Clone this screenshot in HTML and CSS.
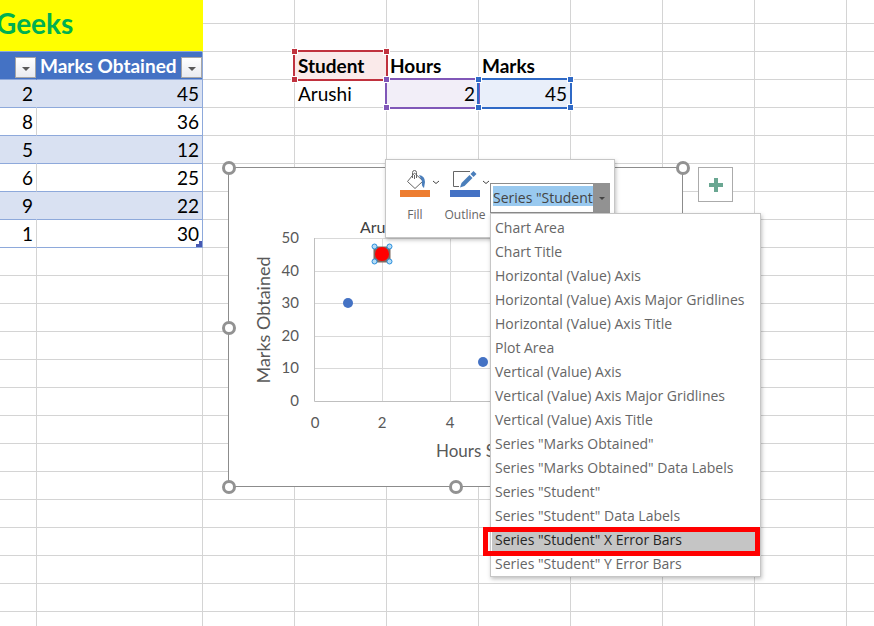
FILE: index.html
```
<!DOCTYPE html>
<html lang="en">
<head>
    <meta charset="UTF-8">
    <meta name="viewport" content="width=device-width, initial-scale=1.0">
    <title>Marks Obtained</title>
    <link rel="stylesheet" href="styles.css">
</head>
<body>
    <div class="sheet">
        <table class="grid">
            <colgroup>
                <col class="col-hours">
                <col class="col-marks">
                <col class="col" span="7">
                <col>
            </colgroup>
            <tbody id="rows">
                <tr class="first">
                    <td class="title" colspan="2" rowspan="2">Geeks</td>
                    <td></td><td></td><td></td><td></td><td></td><td></td><td></td><td></td>
                </tr>
                <tr>
                    <td></td><td></td><td></td><td></td><td></td><td></td><td></td><td></td>
                </tr>
                <tr>
                    <th class="head"><button class="filter" aria-label="Filter hours"></button></th>
                    <th class="head last">Marks Obtained<button class="filter" aria-label="Filter marks"></button></th>
                    <td></td>
                    <th class="range red">Student<i></i></th>
                    <th>Hours</th>
                    <th>Marks</th>
                    <td></td><td></td><td></td><td></td>
                </tr>
                <tr>
                    <td class="data band">2</td><td class="data band last">45</td>
                    <td></td>
                    <td>Arushi</td>
                    <td class="range purple num">2<i></i></td>
                    <td class="range blue num">45<i></i></td>
                    <td></td><td></td><td></td><td></td>
                </tr>
                <tr>
                    <td class="data">8</td><td class="data last">36</td>
                    <td></td><td></td><td></td><td></td><td></td><td></td><td></td><td></td>
                </tr>
                <tr>
                    <td class="data band">5</td><td class="data band last">12</td>
                    <td></td><td></td><td></td><td></td><td></td><td></td><td></td><td></td>
                </tr>
                <tr>
                    <td class="data">6</td><td class="data last">25</td>
                    <td></td><td></td><td></td><td></td><td></td><td></td><td></td><td></td>
                </tr>
                <tr>
                    <td class="data band">9</td><td class="data band last">22</td>
                    <td></td><td></td><td></td><td></td><td></td><td></td><td></td><td></td>
                </tr>
                <tr>
                    <td class="data">1</td><td class="data last corner">30</td>
                    <td></td><td></td><td></td><td></td><td></td><td></td><td></td><td></td>
                </tr>
            </tbody>
        </table>

        <div class="chart">
            <svg width="455" height="320" viewBox="0 0 455 320">
                <rect class="frame" x="0.5" y="0.5" width="454" height="319"/>
                <g class="lines">
                    <path d="M86 71.5H426M86 104.5H426M86 136.5H426M86 169.5H426M86 201.5H426"/>
                    <path d="M154.5 71V234M222.5 71V234M290.5 71V234M358.5 71V234M426.5 71V234"/>
                </g>
                <path class="axis" d="M86.5 71V234.5H426"/>
                <g class="label end">
                    <text x="71" y="76">50</text>
                    <text x="71" y="109">40</text>
                    <text x="71" y="141">30</text>
                    <text x="71" y="174">20</text>
                    <text x="71" y="206">10</text>
                    <text x="71" y="239">0</text>
                </g>
                <g class="label mid">
                    <text x="87" y="261">0</text>
                    <text x="154" y="261">2</text>
                    <text x="222" y="261">4</text>
                    <text x="290" y="261">6</text>
                    <text x="358" y="261">8</text>
                    <text x="426" y="261">10</text>
                </g>
                <text class="name" x="132" y="66">Arushi</text>
                <text class="caption" x="208" y="290">Hours Studied</text>
                <text class="caption upright mid" transform="translate(42 153) rotate(-90)">Marks Obtained</text>
                <g class="dots">
                    <circle cx="120" cy="136" r="5"/>
                    <circle cx="255" cy="195" r="5"/>
                </g>
                <rect class="pick" x="146" y="80" width="16" height="15"/>
                <circle class="point" cx="154" cy="87" r="7"/>
                <g class="grips">
                    <circle cx="146.5" cy="79.5" r="2.5"/>
                    <circle cx="161.5" cy="79.5" r="2.5"/>
                    <circle cx="146.5" cy="94.5" r="2.5"/>
                    <circle cx="161.5" cy="94.5" r="2.5"/>
                </g>
                <g class="handles">
                    <circle cx="1" cy="1" r="5.500"/>
                    <circle cx="455" cy="1" r="5.500"/>
                    <circle cx="1" cy="161" r="5.500"/>
                    <circle cx="1" cy="320" r="5.500"/>
                    <circle cx="228" cy="320" r="5.500"/>
                    <circle cx="455" cy="320" r="5.500"/>
                </g>
            </svg>
            <button class="add" aria-label="Chart elements">
                <svg width="14" height="14" viewBox="0 0 14 14"><path d="M5 0h4v5h5v4H9v5H5V9H0V5h5z"/></svg>
            </button>
        </div>

        <div class="toolbar">
            <button class="tool">
                <svg width="42" height="28" viewBox="0 0 42 28">
                    <path class="ink" d="M14.500 4L23 12L15 19.500L7.500 12.500ZM12.500 9V3.500Q12.500 1.500 14.500 1.500Q16.500 1.500 16.500 3.500V9M14.500 6V10"/>
                    <path class="paint" d="M19 6Q25 7 25 13L24 19Q21 17 22 12Z"/>
                    <rect class="orange" x="0" y="21" width="30" height="7"/>
                    <path class="arrow" d="M33 12L36 14.500L39 12"/>
                </svg>
                Fill
            </button>
            <button class="tool">
                <svg width="42" height="28" viewBox="0 0 42 28">
                    <path class="ink" d="M20 2.500H3.500V17.500H9"/>
                    <path class="paint" d="M10 18.500L11.500 14L19.500 6L22.500 9L14.500 17Z"/>
                    <path class="paint" d="M20.500 5L23.500 2L26.500 5L23.500 8Z"/>
                    <rect class="navy" x="0" y="21" width="30" height="7"/>
                    <path class="arrow" d="M33 12L36 14.500L39 12"/>
                </svg>
                Outline
            </button>
            <div class="combo">
                <input type="text" aria-label="Chart element" value='Series "Student"'>
                <button class="drop" aria-label="Show chart elements"></button>
                <select class="list" size="15" aria-label="Chart elements">
                    <option>Chart Area</option>
                    <option>Chart Title</option>
                    <option>Horizontal (Value) Axis</option>
                    <option>Horizontal (Value) Axis Major Gridlines</option>
                    <option>Horizontal (Value) Axis Title</option>
                    <option>Plot Area</option>
                    <option>Vertical (Value) Axis</option>
                    <option>Vertical (Value) Axis Major Gridlines</option>
                    <option>Vertical (Value) Axis Title</option>
                    <option>Series "Marks Obtained"</option>
                    <option>Series "Marks Obtained" Data Labels</option>
                    <option>Series "Student"</option>
                    <option>Series "Student" Data Labels</option>
                    <option class="current">Series "Student" X Error Bars</option>
                    <option>Series "Student" Y Error Bars</option>
                </select>
                <div class="marker"></div>
            </div>
        </div>
    </div>

    <script>
        // fill the rest of the window with empty rows
        let rows = document.getElementById("rows");
        while (rows.offsetHeight < window.innerHeight) {
            let row = rows.insertRow();
            for (let i = 0; i < 10; i++) {
                row.insertCell();
            }
        }
    </script>
</body>
</html>
```
FILE: styles.css
```
*, ::before, ::after {
    box-sizing: border-box;
}
body {
    margin: 0;
    height: 100vh;
    overflow: hidden;
    background: white;
    font-family: Lato, sans-serif;
    font-size: 19px;
    color: black;
}
button {
    font-family: inherit;
    padding: 0;
    cursor: pointer;
}
.sheet {
    position: relative;
}

/* cells */
.grid {
    width: 100%;
    table-layout: fixed;
    border-collapse: separate;
    border-spacing: 0;
}
.col-hours {
    width: 37px;
}
.col-marks {
    width: 166px;
}
.col {
    width: 92px;
}
.grid tr {
    height: 28px;
}
.grid .first {
    height: 24px;
}
.grid td, .grid th {
    padding: 0 3px;
    border-right: 1px solid #d4d4d4;
    border-bottom: 1px solid #d4d4d4;
    line-height: 23px;
    text-align: left;
    white-space: nowrap;
}
.grid td:last-child {
    border-right: none;
}
.grid .title {
    padding: 0;
    background: yellow;
    border-right-color: yellow;
    border-bottom-color: #8ea9db;
    color: #00b050;
    font-size: 28px;
    font-weight: bold;
    line-height: 46px;
    vertical-align: top;
    text-indent: -4px;
}
.grid .head {
    position: relative;
    background: #4472c4;
    border-right-color: #4472c4;
    border-bottom-color: #8ea9db;
    color: white;
}
.filter {
    position: absolute;
    right: 0;
    bottom: 1px;
    width: 21px;
    height: 21px;
    border: 1px solid #a6a6a6;
    background: linear-gradient(white, #e9ebf0);
}
.filter::after {
    content: "";
    display: block;
    width: 8px;
    margin: 2px auto 0;
    border: 4px solid transparent;
    border-top-color: #595959;
    border-bottom: 0;
}
.grid .data, .grid .num {
    text-align: right;
}
.grid .data {
    border-bottom-color: #8ea9db;
}
.grid .band {
    background: #d9e1f2;
    border-right-color: #d9e1f2;
}
.grid .last {
    border-right-color: #8ea9db;
}
.corner {
    position: relative;
}
.corner::after {
    content: "";
    position: absolute;
    right: 0;
    bottom: 0;
    width: 6px;
    height: 6px;
    background: #4759b2;
    clip-path: polygon(50% 0, 100% 0, 100% 100%, 0 100%, 0 50%, 50% 50%);
}

/* coloured ranges with a square on each corner */
.range {
    position: relative;
}
.range i {
    --dot: linear-gradient(var(--line), var(--line));
    position: absolute;
    inset: -2px;
    border: 2px solid var(--line);
    z-index: 1;
}
.range i::before, .range i::after {
    content: "";
    position: absolute;
    left: -4px;
    right: -4px;
    height: 7px;
    background: var(--dot) 1px 1px / 5px 5px no-repeat,
        var(--dot) right 1px top 1px / 5px 5px no-repeat,
        linear-gradient(white, white) left / 7px 7px no-repeat,
        linear-gradient(white, white) right / 7px 7px no-repeat;
}
.range i::before {
    top: -4px;
}
.range i::after {
    bottom: -4px;
}
.red {
    --line: #c0323e;
    background: #faeaea;
}
.purple {
    --line: #8057b8;
    background: #f2eef8;
}
.blue {
    --line: #2f69c6;
    background: #e9effa;
}

/* chart */
.chart {
    position: absolute;
    left: 228px;
    top: 167px;
    z-index: 2;
}
.chart svg {
    display: block;
    overflow: visible;
}
.frame {
    fill: white;
    stroke: #8c8c8c;
}
.lines, .axis {
    fill: none;
    stroke: #d9d9d9;
}
.axis {
    stroke: #bfbfbf;
}
.chart text {
    fill: #595959;
    font-size: 15px;
}
.chart .name {
    fill: #404040;
    font-size: 16px;
}
.chart .caption {
    font-size: 17px;
}
.chart .upright {
    font-size: 18px;
}
.end {
    text-anchor: end;
}
.mid {
    text-anchor: middle;
}
.dots {
    fill: #4472c4;
}
.pick {
    fill: #7f6a60;
    stroke: #7f6a60;
}
.point {
    fill: red;
}
.grips {
    fill: #b4dcf7;
    stroke: #2b8fdc;
}
.handles {
    fill: white;
    stroke: #929292;
    stroke-width: 3px;
}
.add {
    position: absolute;
    left: 470px;
    top: 0;
    display: grid;
    place-items: center;
    width: 35px;
    height: 35px;
    border: 1px solid #ababab;
    background: white;
}
.add path {
    fill: #6aa792;
}

/* format toolbar */
.toolbar {
    position: absolute;
    left: 385px;
    top: 159px;
    z-index: 3;
    display: flex;
    width: 230px;
    height: 79px;
    padding: 9px 4px 0 14px;
    border: 1px solid #c6c6c6;
    background: white;
    box-shadow: 1px 2px 4px rgba(0, 0, 0, 0.25);
}
.tool {
    display: flex;
    flex: none;
    flex-direction: column;
    align-items: center;
    gap: 10px;
    width: 30px;
    height: 60px;
    margin-right: 20px;
    border: none;
    background: none;
    color: #666;
    font-family: "Open Sans", sans-serif;
    font-size: 12px;
    line-height: 16px;
}
.tool svg {
    flex: none;
    align-self: flex-start;
}
.ink, .arrow {
    fill: none;
    stroke: #666;
}
.arrow {
    stroke: #444;
}
.paint {
    fill: #4a7ebb;
}
.orange {
    fill: #ed7d31;
}
.navy {
    fill: #4472c4;
}
.combo {
    position: relative;
    flex: none;
    display: flex;
    width: 120px;
    height: 30px;
    margin: 14px 0 0 -10px;
}
.combo input {
    flex: 1;
    min-width: 0;
    padding: 0;
    border: 1px solid #8c8c8c;
    border-right: 0;
    border-radius: 0;
    background: linear-gradient(#99c9ef, #99c9ef) 2px 2px / 100% 20px no-repeat;
    color: #444;
    font-family: "Open Sans", sans-serif;
    font-size: 14px;
    line-height: 20px;
    text-indent: 2px;
}
.drop {
    flex: none;
    width: 17px;
    border: none;
    background: #929292;
}
.drop::after {
    content: "";
    display: block;
    width: 6px;
    margin: 0 auto;
    border: 3px solid transparent;
    border-top-color: #444;
    border-bottom: 0;
}
.list {
    position: absolute;
    left: 0;
    top: 30px;
    width: 271px;
    height: 364px;
    padding: 2px 0 0 1px;
    border: 1px solid #c6c6c6;
    border-radius: 0;
    outline: none;
    overflow: hidden;
    background: white;
    box-shadow: 1px 2px 4px rgba(0, 0, 0, 0.25);
    font-family: "Open Sans", sans-serif;
    font-size: 14px;
}
.list option {
    height: 24px;
    min-height: 24px;
    padding: 2px 3px 0;
    color: #666;
}
.list .current {
    background: #c5c5c5;
    color: #262626;
}
/* red box round the entry to choose */
.marker {
    position: absolute;
    left: -7px;
    top: 344px;
    width: 277px;
    height: 29px;
    border: 5px solid red;
    pointer-events: none;
}
```
